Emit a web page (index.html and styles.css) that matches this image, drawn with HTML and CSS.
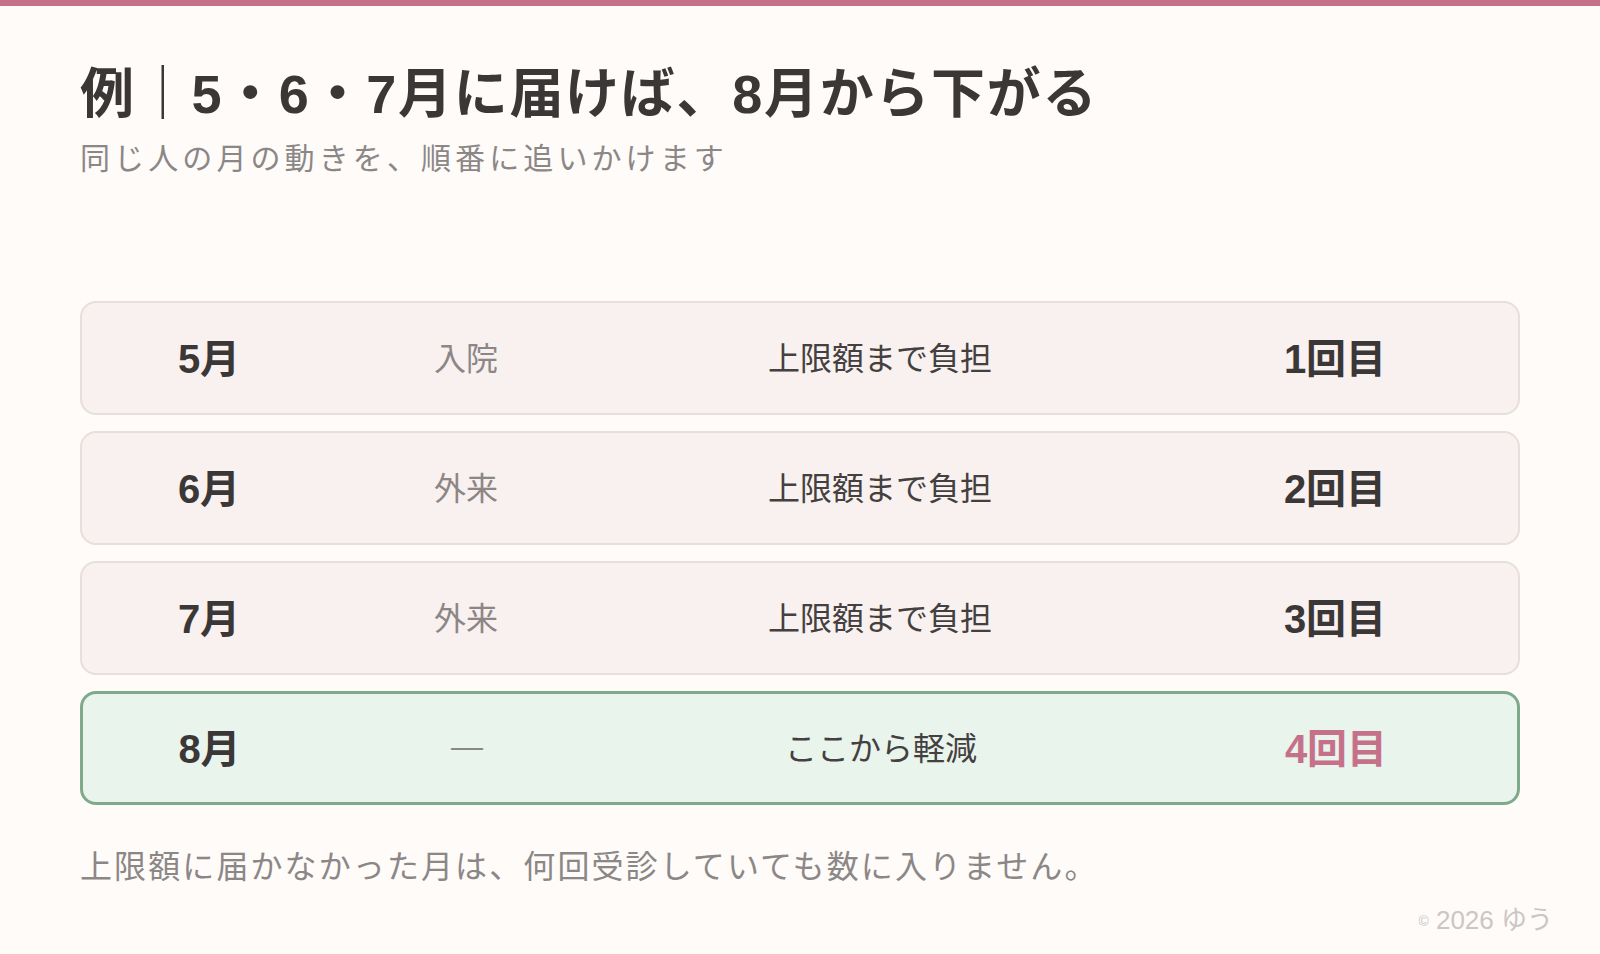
FILE: index.html
```html
<!DOCTYPE html>
<html lang="ja">
<head>
    <meta charset="UTF-8">
    <meta name="viewport" content="width=device-width, initial-scale=1.0">
    <title>例｜5・6・7月に届けば、8月から下がる</title>
    <link rel="stylesheet" href="styles.css">
</head>
<body>

    <div class="top-bar"></div>

    <div class="page">
        <h1 class="title">例｜5・6・7月に届けば、8月から下がる</h1>
        <p class="subtitle">同じ人の月の動きを、順番に追いかけます</p>

        <ul class="months">
            <li class="month-row">
                <span class="month">5月</span>
                <span class="kind">入院</span>
                <span class="status">上限額まで負担</span>
                <span class="count">1回目</span>
            </li>
            <li class="month-row">
                <span class="month">6月</span>
                <span class="kind">外来</span>
                <span class="status">上限額まで負担</span>
                <span class="count">2回目</span>
            </li>
            <li class="month-row">
                <span class="month">7月</span>
                <span class="kind">外来</span>
                <span class="status">上限額まで負担</span>
                <span class="count">3回目</span>
            </li>
            <li class="month-row highlight">
                <span class="month">8月</span>
                <span class="kind">—</span>
                <span class="status">ここから軽減</span>
                <span class="count">4回目</span>
            </li>
        </ul>

        <p class="note">上限額に届かなかった月は、何回受診していても数に入りません。</p>
    </div>

    <div class="credit"><span class="copy">©</span> 2026 ゆう</div>

</body>
</html>
```

FILE: styles.css
```css
body {
    font-family: "Liberation Sans", "Noto Sans CJK JP", sans-serif;
    background-color: #fefbf8;
    color: #3b3737;
    margin: 0;
    min-height: 100vh;
    position: relative;
}
.top-bar {
    height: 6px;
    background: #c6718a;
}
.page {
    padding: 0 80px;
}
.title {
    font-size: 54px;
    font-weight: 700;
    line-height: 65px;
    letter-spacing: 1.7px;
    margin: 56px 0 0;
    color: #3b3737;
}
.subtitle {
    font-size: 30px;
    line-height: 42px;
    letter-spacing: 4.1px;
    color: #8c8787;
    margin: 11px 0 0;
}
.months {
    list-style: none;
    padding: 0;
    margin: 121px 0 0;
    display: flex;
    flex-direction: column;
    gap: 16px;
}
.month-row {
    display: grid;
    grid-template-columns: 254px 260px 568px 342px;
    align-items: center;
    height: 114px;
    box-sizing: border-box;
    padding-bottom: 4px;
    background: #f8f1ef;
    border: 2px solid #e8dedb;
    border-radius: 16px;
    text-align: center;
}
.month, .count {
    font-size: 40px;
    font-weight: 700;
    color: #3b3737;
}
.kind {
    font-size: 32px;
    color: #8d8686;
}
.status {
    font-size: 32px;
    color: #444040;
}
.highlight {
    background: #e8f4ec;
    border: 3px solid #7fa98a;
}
.highlight .month {
    margin-left: -1px;
}
.highlight .count {
    color: #c6718a;
}
.note {
    font-size: 32px;
    line-height: 45px;
    letter-spacing: 2.1px;
    color: #8c8787;
    margin: 40px 0 0;
}
.credit {
    position: absolute;
    right: 47px;
    bottom: 18px;
    font-size: 26px;
    color: #cbc6c5;
}
.copy {
    font-size: 14px;
    vertical-align: 3px;
}
```
